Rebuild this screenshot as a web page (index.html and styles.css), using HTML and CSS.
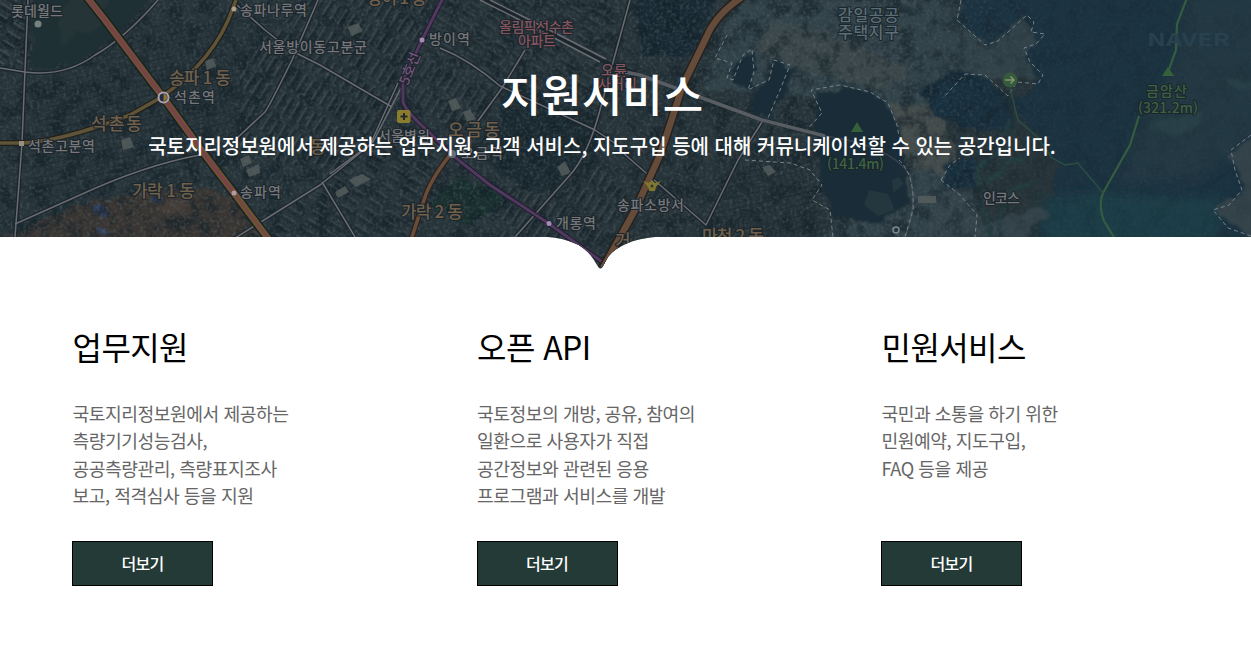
FILE: index.html
```
<!DOCTYPE html>
<html lang="ko">

<head>
    <meta charset="UTF-8">
    <meta name="viewport" content="width=device-width, initial-scale=1.0">
    <title>지원서비스</title>
    <link rel="stylesheet" href="styles.css">
</head>

<body>
    <!-- Visual -->
    <section class="visual">
        <svg class="visual-map" width="1251" height="270" viewBox="0 0 1251 270" aria-hidden="true">
            <defs>
                <clipPath id="notch">
                    <path d="M0 0H1251V237H655C634 239 616 246 608 257L603.500 265Q600.500 272 597 265L592 257C583 244 568 239 548 237H0Z" />
                </clipPath>
                <filter id="grain" x="0" y="0" width="100%" height="100%" color-interpolation-filters="sRGB">
                    <feTurbulence type="fractalNoise" baseFrequency="0.3" numOctaves="3" seed="4" />
                    <feColorMatrix values="0 0 0 0 0.34  0 0 0 0 0.4  0 0 0 0 0.42  2.4 1.6 0 0 -1.85" />
                </filter>
                <filter id="shade" x="0" y="0" width="100%" height="100%" color-interpolation-filters="sRGB">
                    <feTurbulence type="fractalNoise" baseFrequency="0.06" numOctaves="4" seed="9" />
                    <feColorMatrix values="0 0 0 0 0.07  0 0 0 0 0.12  0 0 0 0 0.15  4 0 0 0 -1.8" />
                </filter>
                <filter id="soft" x="-10%" y="-10%" width="120%" height="120%" color-interpolation-filters="sRGB">
                    <feTurbulence type="fractalNoise" baseFrequency="0.06" numOctaves="3" seed="2" />
                    <feDisplacementMap in="SourceGraphic" scale="14" xChannelSelector="R" yChannelSelector="G" />
                    <feGaussianBlur stdDeviation="0.9" />
                </filter>
                <filter id="blur" x="-20%" y="-20%" width="140%" height="140%">
                    <feGaussianBlur stdDeviation="6" />
                </filter>
                <linearGradient id="fade">
                    <stop offset="0" stop-color="#fff" />
                    <stop offset=".72" stop-color="#fff" />
                    <stop offset=".84" stop-color="#444" />
                    <stop offset="1" stop-color="#333" />
                </linearGradient>
                <mask id="city">
                    <rect width="1251" height="270" fill="url(#fade)" />
                </mask>
                <pattern id="blocks" width="17" height="11" patternUnits="userSpaceOnUse" patternTransform="rotate(-13)">
                    <path d="M0 0H17M0 5.5H17M0 0V11M6 0V11M11 0V11" stroke="#15242b" stroke-width="1" />
                </pattern>
                <pattern id="flats" width="26" height="9" patternUnits="userSpaceOnUse" patternTransform="rotate(-58)">
                    <path d="M2 2H20" stroke="#4b585c" stroke-width="2" />
                    <path d="M2 5H20" stroke="#101b21" stroke-width="3" />
                </pattern>
                <pattern id="flats2" width="22" height="10" patternUnits="userSpaceOnUse" patternTransform="rotate(32)">
                    <path d="M2 2H16" stroke="#4b585c" stroke-width="2" />
                    <path d="M2 5H16" stroke="#101b21" stroke-width="3" />
                </pattern>
            </defs>

            <g clip-path="url(#notch)">
                <rect width="1251" height="270" fill="#27343a" />

                <!-- open ground -->
                <g filter="url(#soft)">
                    <path d="M10 235L75 205 150 190 232 193 262 240H0Z" fill="#393532" />
                    <path d="M145 195L190 200 184 213 150 213Z" fill="#433b35" />
                    <path d="M92 209L106 206 108 213 95 216ZM97 226L108 224 109 232 98 233ZM150 196L158 194 160 200 152 202Z" fill="#344468" />
                    <path d="M460 175L510 200 470 225 430 205Z" fill="#19302f" />
                    <path d="M510 80L600 118 592 165 540 195 490 165Z" fill="#1c2b32" />
                    <path d="M740 0H980L1040 15 1040 80 965 75 930 130 960 237H820L900 190 870 120 800 95 700 90Z" fill="#324249" />
                    <path d="M780 20L850 40 910 70 890 90 820 75 750 50Z" fill="#3b474a" />
                    <path d="M890 100L935 110 960 160 945 180 905 160Z" fill="#444b4b" />
                    <path d="M636 -10H720L690 60 640 55Z" fill="#192a34" />
                </g>

                <!-- right side woods -->
                <g filter="url(#soft)" fill="#182f3d">
                    <path d="M962 -20H1270V260H1030L1050 200 1060 165 1010 100 1042 80 1024 60 1035 35 1026 16 990 46 960 25Z" fill="#1b3240" />
                    <path d="M915 90L950 75 980 72 1008 98 1015 130 970 128 935 115Z" />
                    <path d="M940 165L975 155 975 190 945 190Z" />
                </g>
                <g filter="url(#blur)">
                    <path d="M1190 -20H1270V130L1200 180 1120 185 1135 130 1176 60Z" fill="#223842" />
                    <path d="M1040 200L1110 192 1225 200 1210 260H1040Z" fill="#1b3d46" />
                </g>
                <g filter="url(#soft)" fill="#34434a">
                    <path d="M1265 135L1232 152 1243 190 1215 212 1265 248Z" />
                    <path d="M1225 75L1265 85V95L1225 88Z" fill="#283f47" />
                    <path d="M1150 122L1205 112 1190 135 1150 132Z" fill="#273f46" />
                    <path d="M935 190L975 195 980 225 1040 205 1050 215 1010 250H925Z" />
                </g>
                <!-- golf course -->
                <g fill="none" stroke="#233c3f" stroke-width="5" filter="url(#soft)">
                    <path d="M1010 120Q1005 150 975 170L985 195" />
                    <path d="M1026 155Q1000 165 990 185" />
                    <path d="M1032 180Q995 195 1000 237" />
                    <path d="M980 200L992 237" />
                </g>

                <g mask="url(#city)">
                    <rect width="1251" height="270" filter="url(#shade)" opacity=".55" />
                    <rect width="1251" height="270" filter="url(#grain)" opacity=".4" />
                </g>

                <!-- city blocks -->
                <path d="M35 80L100 58 150 25 240 20 225 60 265 110 235 140 205 150 80 190 30 210Z" fill="url(#blocks)" opacity=".5" />
                <path d="M240 60L310 0H430L400 100 330 175 240 150Z" fill="url(#flats)" opacity=".38" />
                <path d="M0 0H28V65H0Z" fill="url(#flats2)" opacity=".5" />
                <path d="M240 240L330 180 400 110 450 155 410 270Z" fill="url(#flats2)" opacity=".3" />
                <path d="M440 0H620L600 120 500 80 420 45Z" fill="url(#flats2)" opacity=".25" />
                <path d="M420 50L500 90 480 130 440 130 410 110Z" fill="url(#flats)" opacity=".3" />
                <path d="M500 185L560 200 600 165 630 200 590 250 500 240Z" fill="url(#flats)" opacity=".35" />
                <path d="M735 165L810 170 830 237H700Z" fill="url(#blocks)" opacity=".5" />

                <!-- lake and hills -->
                <g filter="url(#soft)" fill="#192c37">
                    <path d="M35 -10H155L122 32C95 55 65 70 32 70Z" fill="#1f3034" />
                    <path d="M72 -5H116L96 26 62 42 54 24Z" fill="#253437" />
                    <path d="M816 94L848 87 883 99 900 127 908 160 909 200 880 222 835 218 826 190 816 150Z" />
                    <path d="M776 60L795 72 772 118 754 112 752 94 764 86Z" />
                    <path d="M735 64L754 52 752 90 732 82Z" />
                </g>
                <g fill="#2b3d42" opacity=".6">
                    <path d="M892 180L899 177 904 184 893 193ZM869 190L888 194 895 210 878 216 864 205Z" />
                </g>

                <!-- bright roofs -->
                <g fill="#565f5e" opacity=".8">
                    <path d="M205 61L213 58 216 66 207 70ZM121 140L130 137 134 147 123 150ZM240 159L249 155 252 163 243 167ZM246 170L259 164 260 173 249 177Z" />
                    <path d="M347 27L358 23 363 31 352 36ZM448 101L456 98 461 108 452 111ZM463 112L470 109 476 119 467 122ZM335 192L345 186 349 192 338 198ZM349 180L362 174 371 179 356 187ZM557 167L565 161 571 173 562 176ZM918 196H936V203H918ZM762 167L770 165 776 172 768 176Z" />
                </g>

                <!-- town borders -->
                <g class="border">
                    <path d="M727 35L715 58 732 63 727 78 733 80 743 55 752 49 754 72 748 90 760 84 769 80 774 60 790 65 780 90 768 118" />
                    <path d="M805 132L822 113 811 90 840 85 870 92 888 103 897 125 899 137M745 160L790 163 810 170 822 185 812 200 830 210 833 237M899 160Q915 175 913 210L905 237" />
                    <path d="M961 0L957 20 985 45 998 41 1027 15 1034 22 1031 32 1045 34 1036 44 1024 48 1030 62 1043 75 1038 84 1017 82 1008 96 985 75 965 74 943 98" />
                    <path d="M1251 135L1231 150 1235 170 1242 190 1229 205 1213 210 1228 228 1251 236" />
                    <path d="M941 180L950 165 960 158M941 180L960 195 977 215 975 237" />
                </g>

                <!-- roads -->
                <g class="road-edge">
                    <path d="M28 0L25 70 22 143 15 237M0 68L25 72Q65 77 95 55 125 38 158 0M237 5L265 30 290 50 320 65 392 107" />
                    <path d="M318 0L292 60Q270 105 265 112L235 140M15 224L80 195Q145 165 200 155M232 240L320 185 370 145 398 83M322 182L355 237" />
                    <path d="M440 48Q470 60 500 86L595 130 622 148M630 0L600 110Q588 155 570 175L515 237M525 50L502 88 475 125M762 122L738 160 706 225 622 152" />
                    <path d="M485 0L520 18 600 60 640 75 762 120 825 136" />
                </g>
                <g class="road">
                    <path d="M28 0L25 70 22 143 15 237M0 68L25 72Q65 77 95 55 125 38 158 0M237 5L265 30 290 50 320 65 392 107" />
                    <path d="M318 0L292 60Q270 105 265 112L235 140M15 224L80 195Q145 165 200 155M232 240L320 185 370 145 398 83M322 182L355 237M330 174L373 142 401 88" />
                    <path d="M440 48Q470 60 500 86L595 130 622 148M630 0L600 110Q588 155 570 175L515 237M525 50L502 88 475 125M762 122L738 160 706 225 622 152" />
                    <path d="M480 0L520 20 600 62M490 0L522 16 606 59" />
                    <path class="wide" d="M625 72L640 75 762 120 825 136" />
                    <path d="M825 136Q890 145 910 175 918 205 905 237" opacity=".35" />
                </g>
                <g fill="none">
                    <path d="M0 143H22Q60 142 130 115L160 98Q215 60 233 8L236 0" stroke="#211f1c" stroke-width="6" />
                    <path d="M0 143H22Q60 142 130 115L160 98Q215 60 233 8L236 0" stroke="#5f5438" stroke-width="3.5" />
                    <path d="M86-4L105 20 163 97 205 155 234 193 270 241" stroke="#1c2020" stroke-width="9.500" />
                    <path d="M86-4L105 20 163 97 205 155 234 193 270 241" stroke="#675733" stroke-width="6.500" />
                    <path d="M86-4L105 20 163 97 205 155 234 193" stroke="#7a4149" stroke-width="3.500" />
                    <path d="M234 193L270 241" stroke="#7a4149" stroke-width="2" />
                    <path d="M443-2L422 40 403 80V102Q406 112 430 133L452 155 490 185 548 223 605 264" stroke="#221c30" stroke-width="5" />
                    <path d="M443-2L422 40 403 80V102Q406 112 430 133L452 155 490 185 548 223 605 264" stroke="#4f3a5e" stroke-width="3" />
                    <path d="M450 155Q430 180 424 200L411 240" stroke="#2a2320" stroke-width="6" />
                    <path d="M450 155Q430 180 424 200L411 240" stroke="#694d3a" stroke-width="3.500" />
                    <path d="M742-3Q715 15 706 38L683 85 660 155 635 210 603 268" stroke="#24211f" stroke-width="9.500" />
                    <path d="M742-3Q715 15 706 38L683 85 660 155 635 210 603 268" stroke="#644b3a" stroke-width="6.500" />
                    <!-- trails -->
                    <path d="M1187-2L1177 24 1176 50 1168 72M1139 116L1130 145 1103 193Q1098 205 1104 221L1115 239" stroke="#355c40" stroke-width="2.2" />
                    <path d="M1010 88L1018 120 1038 138 1052 158 1065 165 1078 163 1103 193" stroke="#2b4d42" stroke-width="1.5" />
                </g>

                <!-- markers -->
                <circle cx="163.500" cy="97.500" r="5" fill="#252b43" stroke="#a9a4ad" stroke-width="2" />
                <path d="M163.500 94A3.500 3.500 0 0 1 163.500 101Z" fill="#8d752e" />
                <circle cx="234" cy="9" r="2.500" fill="#aaa08d" />
                <circle cx="234" cy="193" r="2.500" fill="#b49aa6" />
                <circle cx="422" cy="40" r="2.500" fill="#a68cb4" />
                <circle cx="549" cy="223.500" r="2.500" fill="#a68cb4" />
                <circle cx="452" cy="154" r="4" fill="#657078" />
                <rect x="19" y="141" width="5" height="5" fill="#97927e" />
                <circle cx="38" cy="24" r="3.500" fill="#77827f" />
                <circle cx="896" cy="230" r="3" fill="none" stroke="#7a878d" stroke-width="1.500" />
                <rect x="397" y="110" width="13.500" height="13" rx="2" fill="#8a7d2e" />
                <path d="M404 113V120M400.500 116.500H407.500" stroke="#26292a" stroke-width="2" />
                <path d="M643 181L649 183 652 180 655 183 661 181 656 187 655 191H649L648 187Z" fill="#81772f" />
                <circle cx="652" cy="186" r="1.500" fill="#333a31" />
                <path d="M857 122L863 132H851ZM1168 67L1174 76H1162Z" fill="#34613a" />
                <circle cx="1010" cy="80" r="7.500" fill="#365a3c" />
                <path d="M1005 80H1014M1010.500 76.500L1014 80 1010.500 83.500" fill="none" stroke="#83946f" stroke-width="1.500" />

                <!-- place names -->
                <g class="place">
                    <text x="11" y="16" textLength="52">롯데월드</text>
                    <text x="240" y="15" textLength="67">송파나루역</text>
                    <text x="259" y="52" textLength="108">서울방이동고분군</text>
                    <text x="174" y="102" textLength="41">석촌역</text>
                    <text x="28" y="151" textLength="67">석촌고분역</text>
                    <text x="240" y="197" textLength="41">송파역</text>
                    <text x="429" y="44" textLength="41">방이역</text>
                    <text x="378" y="141" textLength="52">서울병원</text>
                    <text x="461" y="158" textLength="42">오금역</text>
                    <text x="556" y="228" textLength="40">개롱역</text>
                    <text x="617" y="210" textLength="67">송파소방서</text>
                    <text x="983" y="203" textLength="37">인코스</text>
                </g>
                <g class="place area">
                    <text x="838" y="21" textLength="61">감일공공</text>
                    <text x="838" y="38" textLength="61">주택지구</text>
                </g>
                <g class="place dong">
                    <text x="169" y="84" textLength="62">송파 1 동</text>
                    <text x="91" y="130" textLength="51">석 촌 동</text>
                    <text x="132" y="197" textLength="63">가락 1 동</text>
                    <text x="367" y="4" textLength="60">방이 1 동</text>
                    <text x="310" y="153">동</text>
                    <text x="448" y="136" textLength="52">오 금 동</text>
                    <text x="401" y="218" textLength="62">가락 2 동</text>
                    <text x="702" y="242" textLength="62">마천 2 동</text>
                    <text x="615" y="247">거</text>
                </g>
                <g class="place apt">
                    <text x="499" y="32" textLength="75">올림픽선수촌</text>
                    <text x="518" y="46" textLength="38">아파트</text>
                    <text x="601" y="75" textLength="26">오륜</text>
                    <text x="598" y="89" textLength="39">사거리</text>
                </g>
                <text class="place line" transform="translate(408 86) rotate(-68)">5호선</text>
                <g class="place mountain">
                    <text x="1146" y="96" textLength="41">금암산</text>
                    <text x="1138" y="113" textLength="60">(321.2m)</text>
                    <text x="827" y="169" textLength="57">(141.4m)</text>
                </g>
                <text class="mark" x="1147" y="46" textLength="83" lengthAdjust="spacingAndGlyphs">NAVER</text>
            </g>
        </svg>
        <div class="visual-text">
            <h1>지원서비스</h1>
            <p>국토지리정보원에서 제공하는 업무지원, 고객 서비스, 지도구입 등에 대해 커뮤니케이션할 수 있는 공간입니다.</p>
        </div>
    </section>

    <!-- Services -->
    <section class="services">
        <div class="service">
            <h2>업무지원</h2>
            <p>국토지리정보원에서 제공하는<br>측량기기성능검사,<br>공공측량관리, 측량표지조사<br>보고, 적격심사 등을 지원</p>
            <a href="#" class="more-btn">더보기</a>
        </div>
        <div class="service">
            <h2>오픈 API</h2>
            <p>국토정보의 개방, 공유, 참여의<br>일환으로 사용자가 직접<br>공간정보와 관련된 응용<br>프로그램과 서비스를 개발</p>
            <a href="#" class="more-btn">더보기</a>
        </div>
        <div class="service">
            <h2>민원서비스</h2>
            <p>국민과 소통을 하기 위한<br>민원예약, 지도구입,<br>FAQ 등을 제공</p>
            <a href="#" class="more-btn">더보기</a>
        </div>
    </section>
</body>

</html>
```

FILE: styles.css
```
* {
    box-sizing: border-box;
    margin: 0;
    padding: 0;
}

body {
    font-family: "Noto Sans CJK KR", sans-serif;
    background-color: #fff;
    color: #000;
    overflow: hidden;
}

/* Visual */
.visual {
    position: relative;
    height: 237px;
    color: #fff;
}

/* map sits behind the heading and hangs over the bottom edge */
.visual-map {
    position: absolute;
    top: 0;
    left: 0;
}

.visual-text {
    position: relative;
    width: 1204px;
    padding-top: 60px;
    text-align: center;
}

.visual-text h1 {
    font-size: 44px;
    font-weight: 500;
    line-height: 66px;
}

.visual-text p {
    margin-top: 2px;
    font-size: 20px;
    font-weight: 500;
    line-height: 36px;
    white-space: nowrap;
}

/* Map */
.road,
.road-edge,
.border {
    fill: none;
    stroke-linejoin: round;
}

.road {
    stroke: #6a6b72;
    stroke-width: 1.5;
}

.road .wide {
    stroke-width: 3.5;
    stroke: #585c63;
}

.road-edge {
    stroke: #1a262c;
    stroke-width: 4;
}

.border {
    stroke: #74838a;
    stroke-width: 1;
    stroke-dasharray: 4 3;
}

.place {
    font-size: 14px;
    font-weight: 500;
    fill: #75777a;
    stroke: #1b252b;
    stroke-width: 2px;
    paint-order: stroke;
}

.area {
    font-size: 16px;
    fill: #5b6d76;
}

.dong {
    font-size: 17px;
    fill: #70604b;
}

.apt {
    fill: #85555f;
}

.line {
    fill: #75557f;
}

.mountain {
    fill: #3b6343;
}

.mark {
    font-size: 17px;
    font-weight: 700;
    fill: #28414e;
}

/* Services */
.services {
    display: grid;
    grid-template-columns: repeat(3, 404.5px);
    padding: 83px 0 0 72px;
}

.service {
    display: flex;
    flex-direction: column;
    align-items: flex-start;
}

.service h2 {
    padding-left: 0.6px;
    font-size: 32px;
    font-weight: 400;
    line-height: 52px;
    letter-spacing: -0.6px;
}

.service p {
    height: 110px;
    margin-top: 28px;
    padding-left: 0.5px;
    color: #666;
    font-size: 18.2px;
    line-height: 27.4px;
    letter-spacing: -0.48px;
}

.more-btn {
    width: 141px;
    height: 45px;
    margin-top: 31px;
    border: 1px solid #000;
    background-color: #233a36;
    color: #fff;
    font-size: 16px;
    font-weight: 500;
    line-height: 43px;
    letter-spacing: -0.7px;
    text-align: center;
    text-decoration: none;
}
```
